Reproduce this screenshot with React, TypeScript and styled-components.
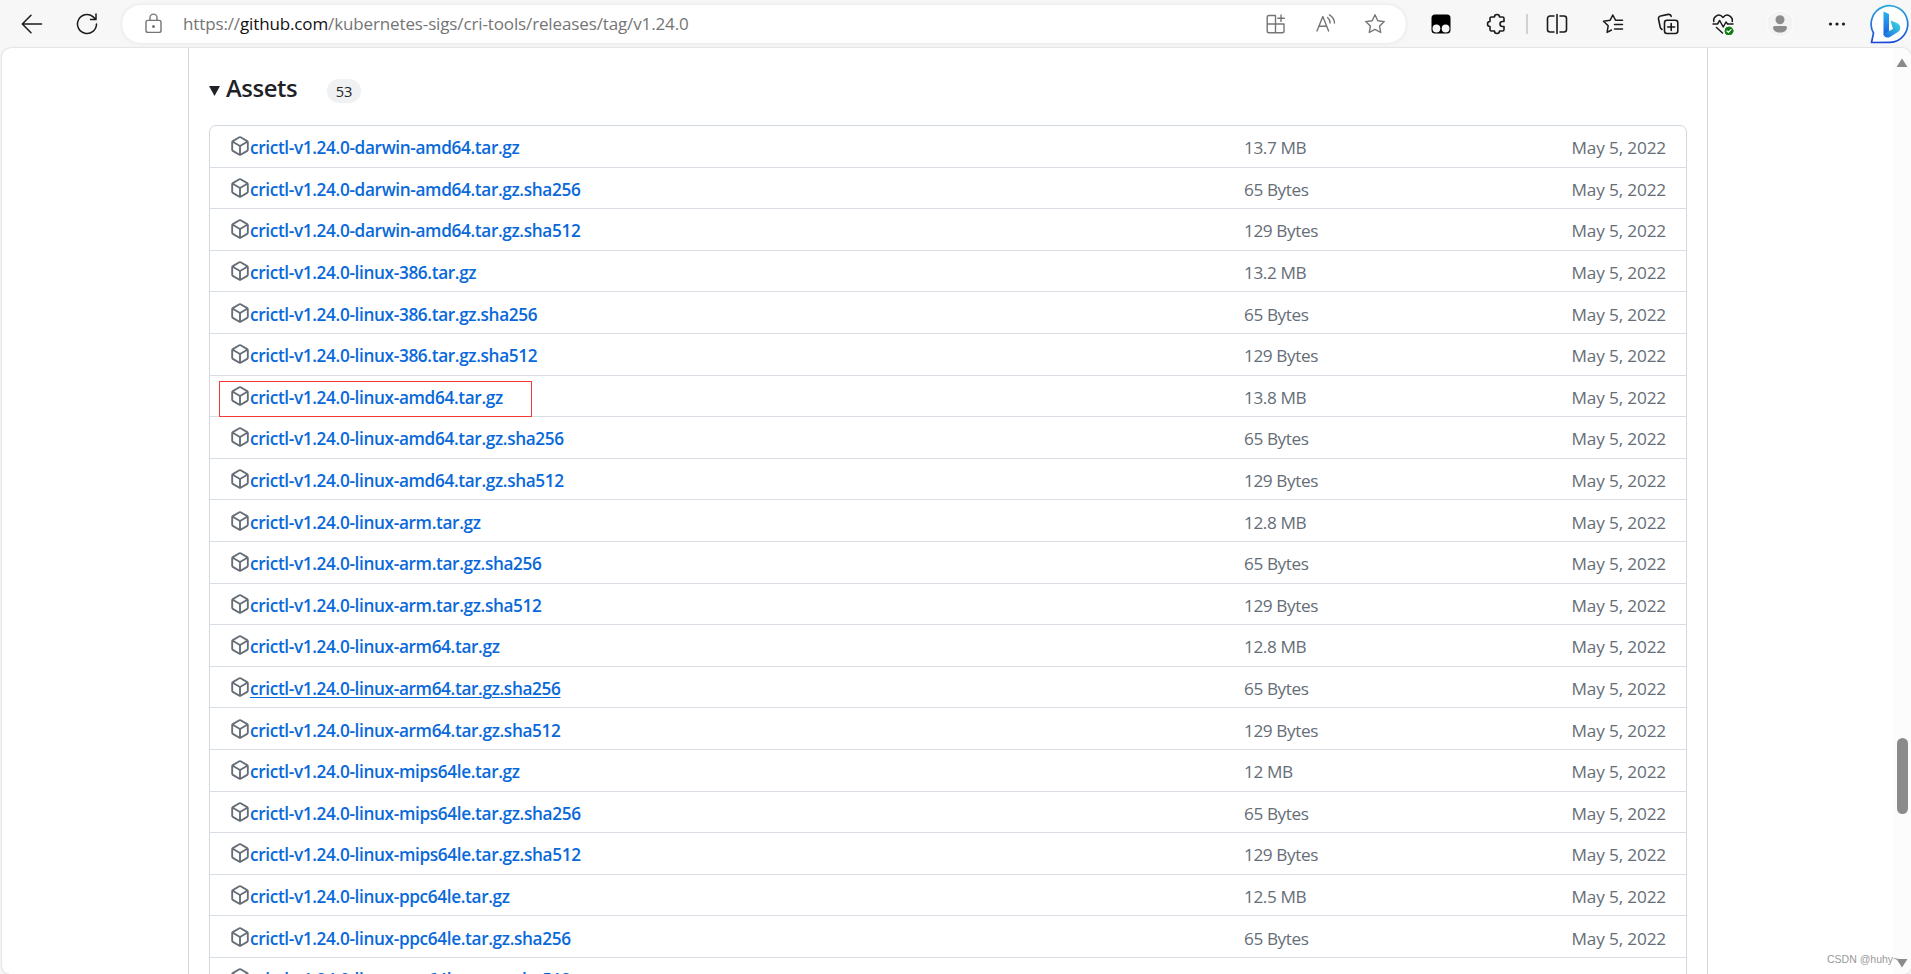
import React from 'react';
import styled, { createGlobalStyle } from 'styled-components';

const Global = createGlobalStyle`
  *, *::before, *::after { box-sizing: border-box; }
  html, body, #root { margin: 0; height: 100%; overflow: hidden; }
  body { background: #f7f7f7; font-family: "Open Sans", "Noto Sans", sans-serif; }
`;

const Window = styled.div`
  width: 1911px;
  height: 974px;
  display: flex;
  flex-direction: column;
  overflow: hidden;
`;
const Toolbar = styled.header`
  height: 48px;
  flex: none;
  display: flex;
  align-items: flex-start;
  background: #f7f7f7;
`;
const ToolButton = styled.button<{ $w: number }>`
  border: 0;
  padding: 0;
  background: none;
  width: ${(p) => p.$w}px;
  height: 47px;
  display: flex;
  align-items: center;
  justify-content: center;
  color: #1b1b1b;
  flex: none;
`;
const NavButtons = styled.nav`
  display: flex;
  flex: none;
  width: 122px;
  padding-left: 4px;
`;
const AddressBar = styled.div`
  flex: none;
  width: 1284px;
  height: 38px;
  margin-top: 5px;
  border-radius: 19px;
  background: #fff;
  box-shadow: 0 0 4px rgba(0, 0, 0, 0.09);
  display: flex;
  align-items: center;
  color: #757575;
`;
const LockSlot = styled.span`
  width: 61px;
  padding-left: 21px;
  display: flex;
`;
const Url = styled.span`
  flex: 1;
  padding-bottom: 2px;
  font-size: 17px;
  letter-spacing: -0.13px;
  white-space: nowrap;
  b { color: #111; font-weight: 400; }
`;
const AddressActions = styled.span`
  display: flex;
  padding-right: 7px;
  button { color: #757575; height: 38px; }
`;
const Extensions = styled.div`
  display: flex;
  flex: none;
  align-items: center;
  height: 47px;
  padding-left: 8px;
  button:last-child { margin-left: 5px; }
`;
const Separator = styled.i`
  width: 2px;
  height: 20px;
  background: #d1d1d1;
  flex: none;
`;
const Avatar = styled.span`
  width: 28px;
  height: 28px;
  border-radius: 50%;
  border: 1px solid #fff;
  background: #f3f3f3;
  display: flex;
`;

const Viewport = styled.main`
  flex: 1;
  min-height: 0;
  margin-left: 2px;
  display: flex;
  justify-content: space-between;
  background: #fff;
  border-radius: 9px 9px 8px 8px;
  box-shadow: 0 0 2px rgba(0, 0, 0, 0.25);
  overflow: hidden;
`;
const Release = styled.section`
  margin-left: 186px;
  width: 1520px;
  border: solid #d0d7de;
  border-width: 0 1px;
  padding: 0 20px;
`;
const Summary = styled.h3`
  margin: 0;
  height: 77px;
  padding-top: 22px;
  display: flex;
  align-items: flex-start;
  font-weight: 400;
  color: #1f2328;
`;
const Disclosure = styled.svg`
  width: 11px;
  height: 10px;
  margin-top: 16px;
  flex: none;
`;
const Title = styled.span`
  font-size: 23.8px;
  font-weight: 600;
  line-height: 36px;
  letter-spacing: -0.4px;
  margin-left: 6px;
  width: 101px;
`;
const Counter = styled.span`
  width: 34px;
  height: 24px;
  margin-top: 9px;
  border-radius: 12px;
  background: #eff1f3;
  font-size: 14.6px;
  font-weight: 500;
  line-height: 25px;
  text-align: center;
`;
const AssetList = styled.ul`
  list-style: none;
  margin: 0;
  padding: 0;
  border: 1px solid #d0d7de;
  border-radius: 7px;
`;
const AssetRow = styled.li`
  height: 41.6px;
  display: grid;
  grid-template-columns: 1014px 1fr auto;
  padding: 3px 20px 0;
  align-items: center;
  font-size: 17.2px;
  color: #656d76;
  white-space: nowrap;
  &:first-child { height: 40.6px; }
  & + & { border-top: 1px solid #d8dee4; }
`;
const AssetName = styled.span<{ $marked?: boolean }>`
  display: flex;
  align-items: center;
  position: relative;
  &::after {
    content: ${(p) => (p.$marked ? '""' : 'none')};
    position: absolute;
    left: -11px;
    top: -5px;
    width: 313px;
    height: 36px;
    border: 1px solid #f53a35;
  }
`;
const PackageSvg = styled.svg`
  width: 20px;
  height: 20px;
  margin-bottom: 3px;
  flex: none;
`;
const AssetLink = styled.a<{ $hovered?: boolean }>`
  color: #0969da;
  font-weight: 600;
  letter-spacing: -0.35px;
  text-decoration: ${(p) => (p.$hovered ? 'underline' : 'none')};
  text-underline-offset: 2px;
  text-decoration-thickness: 1px;
`;
const Size = styled.span`
  letter-spacing: -0.4px;
`;
const Published = styled.time`
  letter-spacing: -0.15px;
`;
const Scrollbar = styled.aside`
  width: 18px;
  background: #fcfcfc;
  display: flex;
  flex-direction: column;
  align-items: center;
`;
const ScrollArrow = styled.svg<{ $above?: number; $below?: number }>`
  width: 12px;
  height: 10px;
  flex: none;
  margin-top: ${(p) => p.$above ?? 0}px;
  margin-bottom: ${(p) => p.$below ?? 0}px;
`;
const Track = styled.div`
  flex: 1;
  padding-top: 670px;
`;
const Thumb = styled.div`
  width: 11px;
  height: 76px;
  border-radius: 6px;
  background: #8b8b8b;
`;
const Watermark = styled.span`
  position: absolute;
  left: 1827px;
  top: 952px;
  font: 10.5px/14px "Liberation Sans", sans-serif;
  color: #999;
  white-space: nowrap;
`;

const Line = ({ size = 22, w = 1.5, children }: { size?: number; w?: number; children: React.ReactNode }) => (
  <svg width={size} height={size} viewBox={`0 0 ${size} ${size}`} fill="none" stroke="currentColor" strokeWidth={w} strokeLinecap="round" strokeLinejoin="round">
    {children}
  </svg>
);

const PackageIcon = () => (
  <PackageSvg viewBox="0 0 16 16" fill="#656d76">
    <path d="m8.878.392 5.25 3.045c.54.314.872.89.872 1.514v6.098a1.75 1.75 0 0 1-.872 1.514l-5.25 3.045a1.75 1.75 0 0 1-1.756 0l-5.25-3.045A1.75 1.75 0 0 1 1 11.049V4.951c0-.624.332-1.201.872-1.514L7.122.392a1.75 1.75 0 0 1 1.756 0ZM7.875 1.69l-4.63 2.685L8 7.133l4.755-2.758-4.63-2.685a.248.248 0 0 0-.25 0ZM2.5 5.677v5.372c0 .09.047.171.125.216l4.625 2.683V8.432Zm6.25 8.271 4.625-2.683a.25.25 0 0 0 .125-.216V5.677L8.75 8.432Z" />
  </PackageSvg>
);

const families = [
  ['darwin-amd64', '13.7 MB'],
  ['linux-386', '13.2 MB'],
  ['linux-amd64', '13.8 MB'],
  ['linux-arm', '12.8 MB'],
  ['linux-arm64', '12.8 MB'],
  ['linux-mips64le', '12 MB'],
  ['linux-ppc64le', '12.5 MB'],
];
const assets = families.flatMap(([arch, size]) => [
  { name: `crictl-v1.24.0-${arch}.tar.gz`, size },
  { name: `crictl-v1.24.0-${arch}.tar.gz.sha256`, size: '65 Bytes' },
  { name: `crictl-v1.24.0-${arch}.tar.gz.sha512`, size: '129 Bytes' },
]);

export default function App() {
  return (
    <Window>
      <Global />
      <Toolbar>
        <NavButtons>
          <ToolButton $w={56}>
            <Line><path d="M20.5 11H1.5M10 2.2 1.3 11l8.7 8.8" /></Line>
          </ToolButton>
          <ToolButton $w={54}>
            <Line><path d="M20.5 11a9.5 9.5 0 1 1-3.6-7.4l2.4 2.4M20 1v5.5h-5.5" /></Line>
          </ToolButton>
        </NavButtons>
        <AddressBar>
          <LockSlot>
            <Line w={1.4}><rect x="3" y="7.4" width="15" height="12" rx="2" /><path d="M7 7.2V4.6a3.5 3.5 0 0 1 7 0v2.6" /><circle cx="10.5" cy="13.4" r=".8" fill="currentColor" /></Line>
          </LockSlot>
          <Url>https://<b>github.com</b>/kubernetes-sigs/cri-tools/releases/tag/v1.24.0</Url>
          <AddressActions>
            <ToolButton $w={50}>
              <Line w={1.4}><path d="M10.5 2.5H4A1.8 1.8 0 0 0 2.2 4.3V18A1.8 1.8 0 0 0 4 19.8h13.2a1.8 1.8 0 0 0 1.8-1.8v-7H2.2M10.5 2.5v17.3M16 2v6.5M12.8 5.2h6.5" /></Line>
            </ToolButton>
            <ToolButton $w={50}>
              <Line w={1.4}><path d="m2 18 5.8-14.5L13.6 18M4 13.2h7.6M12.5 4.5a7 7 0 0 1 2.6 5.5M14.5 1.8a10 10 0 0 1 5 8.2" /></Line>
            </ToolButton>
            <ToolButton $w={48}>
              <Line w={1.4}><path d="m11 1.8 2.8 5.9 6.5.9-4.7 4.5 1.1 6.4L11 16.4l-5.700 3.100 1.100-6.400L1.700 8.600l6.500-.9z" /></Line>
            </ToolButton>
          </AddressActions>
        </AddressBar>
        <Extensions>
          <ToolButton $w={54}>
            <svg width="20" height="20" viewBox="0 0 20 20"><rect x=".5" y=".5" width="19" height="19" rx="3.5" fill="#000" /><circle cx="5.4" cy="14.5" r="3.9" fill="#f7f7f7" /><circle cx="14.6" cy="14.5" r="3.9" fill="#f7f7f7" /></svg>
          </ToolButton>
          <ToolButton $w={58}>
            <Line w={1.6}><path d="M4 5.5A1.5 1.5 0 0 1 5.5 4h3a2.5 2.5 0 0 1 5 0h3A1.5 1.5 0 0 1 18 5.5v3h-1.5a2.5 2.5 0 0 0 0 5H18v3a1.5 1.5 0 0 1-1.5 1.5h-3a2.5 2.5 0 0 1-5 0h-3A1.5 1.5 0 0 1 4 16.5v-3a2.5 2.5 0 0 1 0-5z" /></Line>
          </ToolButton>
          <Separator />
          <ToolButton $w={58}>
            <Line w={1.6}><path d="M8 3H4a2.5 2.5 0 0 0-2.5 2.5v11A2.5 2.5 0 0 0 4 19h4M11 1.5v19M14 3h4a2.5 2.5 0 0 1 2.5 2.5v11A2.5 2.5 0 0 1 18 19h-4" /></Line>
          </ToolButton>
          <ToolButton $w={54}>
            <Line><path d="M13.5 7.2 10.8 2 8.2 7.2l-6.7 1 4.7 4.5-1.1 6.700L9.500 17M13.500 7.200h7M12.500 11.500h8M12.500 16h8" /></Line>
          </ToolButton>
          <ToolButton $w={56}>
            <Line w={1.6}><path d="M5 16.5a4 4 0 0 1-1.8-2.4L1.5 6a2.5 2.5 0 0 1 2-3l7.7-1.6a2.5 2.5 0 0 1 3 2" /><rect x="7.5" y="7.2" width="13.3" height="13.3" rx="2.5" /><path d="M14.2 10.5v7M10.7 14h7" /></Line>
          </ToolButton>
          <ToolButton $w={54}>
            <Line><path d="M1.8 8.5C.8 4 6.8-.8 11 4.5c4.2-5.300 10.200-.5 9.200 4M1 11h4.500l2.200-3.500 3.500 6.500L14 9l1.500 2H21M4.500 14.500l6 5.500" /><circle cx="17" cy="18" r="4" fill="#107c10" stroke="#107c10" strokeWidth="1" /><path d="m15 18 1.4 1.4 2.6-2.7" stroke="#fff" strokeWidth="1.2" /></Line>
          </ToolButton>
          <ToolButton $w={60}>
            <Avatar><svg width="26" height="26" viewBox="0 0 26 26" fill="#8c8c8c"><circle cx="13" cy="8.8" r="4.5" /><path d="M7.5 15h11a1.5 1.5 0 0 1 1.5 1.5c0 3-3 5-7 5s-7-2-7-5A1.5 1.5 0 0 1 7.5 15z" /></svg></Avatar>
          </ToolButton>
          <ToolButton $w={54}>
            <Line><g fill="currentColor" stroke="none"><circle cx="4.5" cy="11" r="1.6" /><circle cx="11" cy="11" r="1.6" /><circle cx="17.5" cy="11" r="1.6" /></g></Line>
          </ToolButton>
          <ToolButton $w={42}>
            <svg width="40" height="40" viewBox="0 0 40 40">
              <defs>
                <linearGradient id="ring" x1="0" y1="0" x2="0" y2="1"><stop offset="0" stopColor="#2aa7dc" /><stop offset="1" stopColor="#1b48d8" /></linearGradient>
                <linearGradient id="stem" x1="0" y1="0" x2="0" y2="1"><stop offset="0" stopColor="#28b4f0" /><stop offset="1" stopColor="#1a5fdc" /></linearGradient>
                <linearGradient id="bowl" x1="1" y1="0" x2="0" y2="1"><stop offset="0" stopColor="#3fe0e0" /><stop offset="1" stopColor="#1b66e0" /></linearGradient>
              </defs>
              <path d="M1.5 38.5 3.500 29A18.300 18.300 0 1 1 20 38.300z" fill="#fff" stroke="url(#ring)" strokeWidth="1.7" strokeLinejoin="round" />
              <path d="M13.5 7.5 19 10v17.5L13.5 31z" fill="url(#stem)" />
              <path d="M13.5 30 23 25l-2.5-8.5 6.5 2.5c4 2 4.500 6.500 1 9L19.500 33.200c-3 1-5.500 0-6-3.200z" fill="url(#bowl)" />
            </svg>
          </ToolButton>
        </Extensions>
      </Toolbar>
      <Viewport>
        <Release>
          <Summary>
            <Disclosure viewBox="0 0 11 10" fill="#1f2328"><path d="M0 0h11L5.5 10z" /></Disclosure>
            <Title>Assets</Title>
            <Counter>53</Counter>
          </Summary>
          <AssetList>
            {assets.map((a) => (
              <AssetRow key={a.name}>
                <AssetName $marked={a.name === 'crictl-v1.24.0-linux-amd64.tar.gz'}>
                  <PackageIcon />
                  <AssetLink $hovered={a.name === 'crictl-v1.24.0-linux-arm64.tar.gz.sha256'}>{a.name}</AssetLink>
                </AssetName>
                <Size>{a.size}</Size>
                <Published>May 5, 2022</Published>
              </AssetRow>
            ))}
          </AssetList>
        </Release>
        <Scrollbar>
          <ScrollArrow viewBox="0 0 12 10" $above={10} fill="#8b8b8b"><path d="M6 .5 11.5 9H.5z" /></ScrollArrow>
          <Track><Thumb /></Track>
          <ScrollArrow viewBox="0 0 12 10" $below={6} fill="#8b8b8b"><path d="M6 9.5.5 1h11z" /></ScrollArrow>
        </Scrollbar>
      </Viewport>
      <Watermark>CSDN @huhy~</Watermark>
    </Window>
  );
}
